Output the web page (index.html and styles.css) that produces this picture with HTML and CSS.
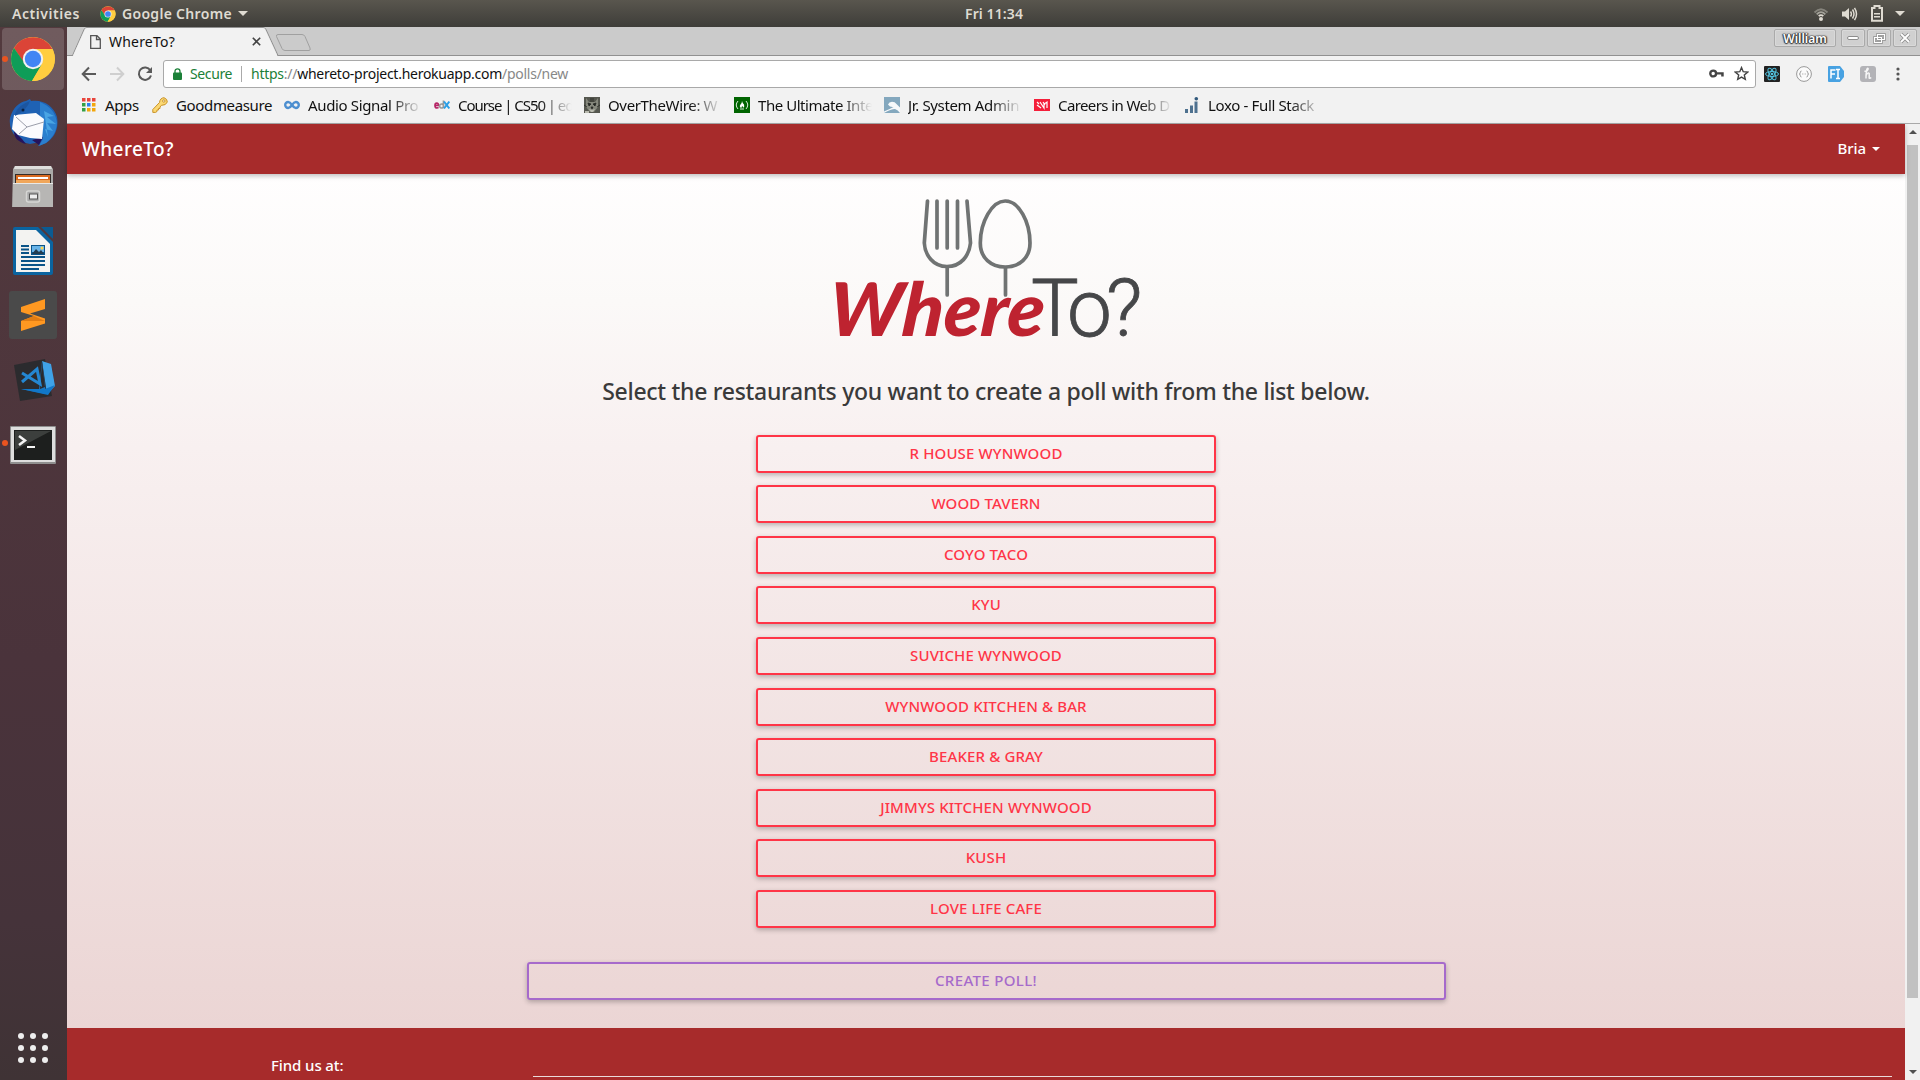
FILE: index.html
```html
<!DOCTYPE html>
<html lang="en">
<head>
<meta charset="utf-8">
<title>WhereTo?</title>
<link rel="stylesheet" href="styles.css">
</head>
<body>
<header class="topbar">
  <div class="topbar-left">
    <span class="activities">Activities</span>
    <svg class="mini-chrome" viewBox="0 0 46 46"><use href="#chrome"/></svg>
    <span class="appname">Google Chrome</span>
    <svg class="tri" viewBox="0 0 10 5"><path d="M0 0h10L5 5z"/></svg>
  </div>
  <span class="clock">Fri 11:34</span>
  <div class="topbar-right">
    <svg width="16" height="16" viewBox="0 0 16 16" fill="none" stroke-width="1.8"><path d="M1.500 6.500Q8 0 14.500 6.500" stroke="#86847c"/><path d="M3.700 8.300Q8 4 12.300 8.300" stroke="#a5a39b"/><path d="M5.700 10.200Q8 8 10.300 10.200" stroke="#dfdbd2"/><circle cx="8" cy="13" r="2" fill="#dfdbd2"/></svg>
    <svg width="17" height="16" viewBox="0 0 17 16"><path d="M1 5.500h3L8 2v12L4 10.500H1z" fill="#dfdbd2"/><path d="M9.500 5.500q1.800 2.500 0 5M11.500 3.500q3 4.500 0 9M13.500 1.800q4 6.200 0 12.400" fill="none" stroke="#dfdbd2" stroke-width="1.500"/></svg>
    <svg width="12" height="17" viewBox="0 0 12 17"><path d="M1 3h2.500V1h5v2H11v12.800H1z" fill="none" stroke="#dfdbd2" stroke-width="2"/><path d="M3 8.700h6M3 11.700h6" stroke="#dfdbd2" stroke-width="1.600"/></svg>
    <svg class="tri" viewBox="0 0 10 5"><path d="M0 0h10L5 5z"/></svg>
  </div>
</header>

<div class="desktop">
  <nav class="launcher">
    <div class="slot active running">
      <svg width="46" height="46" viewBox="0 0 46 46"><g id="chrome"><circle cx="23" cy="23" r="22" fill="#ffcd40"/><path d="M4 12A22 22 0 0 1 42.300 13H23L14 27z" fill="#db4437"/><path d="M4 12A22 22 0 0 0 22 45L31.500 29 14.500 27z" fill="#0f9d58"/><path d="M23 13h19.300A22 22 0 0 1 22 45l10-17z" fill="#ffcd40"/><circle cx="23" cy="23" r="10.200" fill="#f1f1f1"/><circle cx="23" cy="23" r="8.200" fill="#4285f4"/></g></svg>
    </div>
    <div class="slot">
      <svg width="50" height="50" viewBox="0 0 50 50"><path d="M2 20C5 9 12 4 18 3l4-2 1 2c12-2 23 5 26 16 2 11-2 20-11 26l-8 3 2-4-10 2C10 44 0 34 2 20z" fill="#1f62b4"/><path d="M32 4c10 4 16 11 17 21-1 10-5 15-11 20l-7 3 4-7-3-16z" fill="#2b7fce"/><path d="M36 13l10 5-7 1 9 7-9-1 6 8-8-2 3 8z" fill="#49a5e4"/><path d="M6 33l8 8 4 5C10 44 6 40 6 33zM24 42l11-3-4 8z" fill="#25145c"/><path d="M6 17L28 15l8 6-2 20-12-1-12-3-6-6 1-8z" fill="#fbfbfd"/><path d="M8 19l11 10 17-5M19 29l-8 7" fill="none" stroke="#9b9eaa"/><path d="M7 16Q10 7 22 3q-3 9-15 15z" fill="#1c559f"/><circle cx="15" cy="12" r="1.500" fill="#0b2242"/></svg>
    </div>
    <div class="slot">
      <svg width="42" height="44" viewBox="0 0 42 44"><path d="M1 4l2-3h36l2 3v38H0z" fill="#aaa9a7"/><path d="M2 4h38l-1-3H3z" fill="#dededc"/><path d="M3 9h36v9H3z" fill="#342c28"/><path d="M4 10h34v8H4z" fill="#d96a20"/><path d="M6 12h30v2H6z" fill="#fff"/><path d="M4 15h34v4H4z" fill="#f0a65a"/><path d="M1 18h40v24H1z" fill="#b7b6b4"/><path d="M1 18h40v1H1z" fill="#e8e8e6"/><rect x="14.500" y="26" width="13" height="11" rx="2" fill="#aaa" stroke="#d6d6d4" stroke-width="1.500"/><rect x="17.500" y="29" width="8" height="5" fill="#eee" stroke="#555"/></svg>
    </div>
    <div class="slot">
      <svg width="40" height="48" viewBox="0 0 40 48"><path d="M2 0h23l15 15v31q0 2-2 2H2q-2 0-2-2V2q0-2 2-2z" fill="#0a64a0"/><path d="M3 3h20l14 14v28H3z" fill="#f3f3f1"/><path d="M28 0h12v12z" fill="#0b5b92"/><path d="M8 19h8M8 22.500h8M8 26h8M8 30h24M8 34h24M8 38h24M8 42h18" stroke="#0a5488" stroke-width="1.800"/><path d="M18 18h14v10H18z" fill="#0a5488"/><path d="M19 19h12v6H19z" fill="#68b4e8"/><path d="M19 27l4-5 3 3 2-2 3 4z" fill="#223c50"/><circle cx="29" cy="21" r="1.500" fill="#ffd44a"/></svg>
    </div>
    <div class="slot">
      <svg width="48" height="48" viewBox="0 0 48 48"><rect width="48" height="48" rx="3" fill="#4a4a4a"/><path d="M36 8v10L21 22.500l15 5v5L12 40V30l13-5-13-4v-5z" fill="#ff9821"/><path d="M12 30l13-5 11 5z" fill="#e07c14"/></svg>
    </div>
    <div class="slot code">
      <svg width="42" height="44" viewBox="0 0 42 44"><path d="M0 7l31-6 7 37-32 5z" fill="#2b2b2e"/><path d="M28 3l9 3 4 22-8 8z" fill="#3fa2e8"/><path d="M28 3l4 33-25-5 18 1z" fill="#1a75c0"/><path d="M28 3l3 26-5 2z" fill="#2b2b2e"/><path d="M7 31l24 0 10-4-7 10z" fill="#1177c8"/><path d="M8 15l18 11-3-15L8 24" fill="none" stroke="#2487d2" stroke-width="3"/></svg>
    </div>
    <div class="slot running terminal">
      <svg width="46" height="38" viewBox="0 0 46 38"><rect width="46" height="38" rx="1" fill="#8f8f8f"/><rect x="1" y="1" width="44" height="35" fill="#dedede"/><rect x="4" y="4" width="38" height="30" fill="#1d1f1e"/><path d="M5 5h36L5 24z" fill="#3c3f3d"/><path d="M9 10l6 4.500L9 19" fill="none" stroke="#f4f4f4" stroke-width="2.500"/><path d="M17 21h8" stroke="#f4f4f4" stroke-width="2"/></svg>
    </div>
    <div class="grid-button"><i></i><i></i><i></i><i></i><i></i><i></i><i></i><i></i><i></i></div>
  </nav>

  <main class="window">
    <div class="tabstrip">
      <svg class="tabshape" width="250" height="29" viewBox="0 0 250 29"><path d="M0 28.500H5.500L17 2.500Q18 .5 20 .5H196Q198 .5 199 2.500L211 28.500H250" fill="none" stroke="#919191"/><path d="M5.800 29L17.500 3Q18 1 20 1H196Q198 1 198.500 3L210.500 29z" fill="#f2f2f2"/><path d="M211 7.500H235q2 0 3 2L243 21q.8 2.500-1 2.500H218q-2 0-3-2L209.500 9.500q-.5-2 1.500-2z" fill="#cbcbcb" stroke="#a0a0a0"/></svg>
      <div class="tab">
        <svg width="11" height="14" viewBox="0 0 11 14"><path d="M.7.700H7L10.300 4v9.300H.7zM6.500.7V4.500h3.800" fill="none" stroke="#555" stroke-width="1.300"/></svg>
        <span class="tab-title">WhereTo?</span>
        <svg width="9" height="9" viewBox="0 0 9 9"><path d="M.8.800l7.400 7.400M8.200.8L.8 8.200" stroke="#444" stroke-width="1.600"/></svg>
      </div>
      <div class="winbuttons">
        <span class="user">William</span>
        <b><svg width="12" height="4" viewBox="0 0 12 4"><rect x=".5" y=".5" width="11" height="3" rx="1.500" fill="#fff" stroke="#8d8d8d"/></svg></b>
        <b><svg width="13" height="11" viewBox="0 0 13 11" fill="none"><path d="M4.500 1.500h7v5h-7zM1.500 4.500h7v5h-7z" stroke="#8d8d8d" stroke-width="2.600"/><path d="M4.500 1.500h7v5h-7zM1.500 4.500h7v5h-7z" stroke="#fff" stroke-width="1.200"/></svg></b>
        <b><svg width="12" height="12" viewBox="0 0 12 12"><path d="M2 2l8 8M10 2l-8 8" stroke="#8d8d8d" stroke-width="3.500"/><path d="M2 2l8 8M10 2l-8 8" stroke="#fff" stroke-width="1.800"/></svg></b>
      </div>
    </div>

    <div class="toolbar">
      <div class="navicons">
        <svg width="16" height="16" viewBox="0 0 16 16"><path d="M15 8H2M8 1.500L1.700 8 8 14.500" fill="none" stroke="#5a5a5a" stroke-width="2"/></svg>
        <svg width="16" height="16" viewBox="0 0 16 16"><path d="M1 8H14M8 1.500L14.300 8 8 14.500" fill="none" stroke="#cfcfcf" stroke-width="2"/></svg>
        <svg width="16" height="16" viewBox="0 0 16 16"><path d="M13.300 4.300A6.200 6.200 0 1 0 14 9.500" fill="none" stroke="#5a5a5a" stroke-width="2"/><path d="M15 1v6H9z" fill="#5a5a5a"/></svg>
      </div>
      <div class="omnibox">
        <svg width="9" height="12" viewBox="0 0 9 12"><rect y="4.500" width="9" height="7.500" rx="1" fill="#1b8038"/><path d="M2 5V3.300a2.500 2.500 0 0 1 5 0V5" fill="none" stroke="#1b8038" stroke-width="1.300"/></svg>
        <span class="secure">Secure</span>
        <span class="url"><em>https</em>://<strong>whereto-project.herokuapp.com</strong>/polls/new</span>
        <svg class="key" width="15" height="9" viewBox="0 0 15 9"><circle cx="4.200" cy="4.500" r="2.900" fill="none" stroke="#444" stroke-width="2.400"/><path d="M7 3.300h7.700v4.200h-2.500v-2H7z" fill="#444"/></svg>
        <svg class="star" width="15" height="15" viewBox="0 0 15 15"><path d="M7.500 1.600l1.700 4.100 4.500.4-3.400 2.900 1 4.400-3.800-2.300-3.800 2.300 1-4.400L1.300 6.100l4.500-.4z" fill="none" stroke="#444" stroke-width="1.400"/></svg>
      </div>
      <div class="extensions">
        <svg width="16" height="16" viewBox="0 0 16 16"><rect width="16" height="16" rx="1" fill="#222"/><g fill="none" stroke="#53c1de" stroke-width="1"><ellipse cx="8" cy="8" rx="6.500" ry="2.500"/><ellipse cx="8" cy="8" rx="6.500" ry="2.500" transform="rotate(60 8 8)"/><ellipse cx="8" cy="8" rx="6.500" ry="2.500" transform="rotate(120 8 8)"/></g><circle cx="8" cy="8" r="1.300" fill="#53c1de"/></svg>
        <svg width="16" height="16" viewBox="0 0 16 16"><circle cx="8" cy="8" r="7.400" fill="#fbfbfb" stroke="#999"/><path d="M5.500 5Q4.300 5 4.300 6.500T3.300 8q1 0 1 1.500T5.500 11M10.500 5q1.200 0 1.200 1.500T12.700 8q-1 0-1 1.500T10.500 11M6.300 8h1M8.700 8h1" fill="none" stroke="#999"/></svg>
        <svg width="16" height="16" viewBox="0 0 16 16"><path d="M1 0h11l4 5v6l-4 5H1q-1 0-1-1V1q0-1 1-1z" fill="#48a2e2"/><path d="M3 12.500V4h4.500M3 8h4M8 3.500h4M10 3.500v9M8 12.500h4" fill="none" stroke="#fff" stroke-width="1.500"/></svg>
        <svg width="16" height="16" viewBox="0 0 16 16"><rect width="16" height="16" rx="3" fill="#b3b3b7"/><path d="M4.500 5Q7 6 8 3.500 8.500 2 7.300 2.500 6 4 6 12.500M6.200 9Q8 6 9.200 7.500V12q1 .5 2-.5" fill="none" stroke="#f6f6f6" stroke-width="1.500"/></svg>
        <svg width="4" height="14" viewBox="0 0 4 14" fill="#555"><circle cx="2" cy="2" r="1.600"/><circle cx="2" cy="7" r="1.600"/><circle cx="2" cy="12" r="1.600"/></svg>
      </div>
    </div>

    <div class="bookmarks">
      <a class="mark apps"><svg width="14" height="14" viewBox="0 0 14 14"><path d="M0 0h3.500v3.500H0zM5 0h3.500v3.500H5zM10 0h3.500v3.500H10z" fill="#e8453c"/><path d="M0 5h3.500v3.500H0z" fill="#34a045"/><path d="M5 5h3.500v3.500H5z" fill="#2a7fee"/><path d="M10 5h3.500v3.500H10z" fill="#f2a60c"/><path d="M0 10h3.500v3.500H0z" fill="#34a045"/><path d="M5 10h3.500v3.500H5zM10 10h3.500v3.500H10z" fill="#f2a60c"/></svg><span>Apps</span></a>
      <a class="mark good"><svg width="16" height="16" viewBox="0 0 16 16"><path d="M7.500 5.500Q8 1 12 .7 15.500 2 15.300 5 14 8.500 9.500 8.300L8 10v1.500H6.500V13H5v1.500L3.500 15.400H.8V12.500z" fill="#fbd873" stroke="#c99227"/><circle cx="11.800" cy="4" r="1.200" fill="#fff" stroke="#c99227"/></svg><span>Goodmeasure</span></a>
      <a class="mark"><svg width="16" height="16" viewBox="0 0 16 16"><path d="M8 8Q6 5 4.200 5a3 3 0 0 0 0 6Q6 11 8 8t3.800-3a3 3 0 0 1 0 6Q10 11 8 8z" fill="none" stroke="#4d8fd0" stroke-width="2.400"/></svg><span class="fade">Audio Signal Pro</span></a>
      <a class="mark"><svg width="16" height="16" viewBox="0 0 16 16" fill="none" stroke-width="1.700"><path d="M1 8.500h3.500Q4.500 6.200 2.800 6.200 1 6.300 1 8.500 1 11 3 11l1.600-.5" stroke="#b72667"/><path d="M9.500 3.500V11.300M9.500 8.500a2 2 0 1 0 0 1" stroke="#999"/><path d="M10 4.500l5.300 7M15.300 4.500L10 11.500" stroke="#2b9fe6" stroke-width="2"/></svg><span class="fade tighter">Course | CS50 | ed</span></a>
      <a class="mark"><svg width="16" height="16" viewBox="0 0 16 16"><path d="M0 0h16v16H0z" fill="#55574f"/><path d="M2 1l3 4h6l3-4v9l-4 5H6l-4-5z" fill="#85877c"/><path d="M4 6l3 1-2 2zM12 6L9 7l2 2zM7 10h2l-1 2zM7 1v4M9 1v4M0 8l3 2M16 8l-3 2" fill="#262824" stroke="#262824" stroke-width=".8"/><path d="M1 14h4v2H1zM5 12l3 1 3-1-2 3H7z" fill="#b9baaf"/></svg><span class="fade">OverTheWire: W</span></a>
      <a class="mark"><svg width="16" height="16" viewBox="0 0 16 16"><path d="M0 0h16v16H0z" fill="#006400"/><path d="M4 4Q.5 8 4 12M12 4q3.500 4 0 8M6 12h4" fill="none" stroke="#d9ead9"/><path d="M8 4q.5 2 2 3.500 1 2-1 3.500 0-2-1-2 0 1.500-1 2-2-1.500-.5-3.500Q8 6 8 4z" fill="#fff"/></svg><span class="fade tight-s">The Ultimate Inte</span></a>
      <a class="mark"><svg width="16" height="16" viewBox="0 0 16 16"><path d="M0 0h16v16H0z" fill="#84a8be"/><path d="M4 7.500Q5 5 8 4.800 11 4.800 12.500 7L16 10.500V16q-2-3-5-4-4 0-11 4v-1.500Q6 12 9.500 10 6 10.500 4 7.500z" fill="#f6f9fb"/></svg><span class="fade">Jr. System Admin</span></a>
      <a class="mark"><svg width="16" height="12" viewBox="0 0 16 12"><path d="M0 0h16v12H0z" fill="#f41f3a"/><path d="M3 3l2 2M3 6l4 3M6 3l4 6V5l3-2v6M9 3l2 3" fill="none" stroke="#fff" stroke-width="1.200"/></svg><span class="fade tight">Careers in Web D</span></a>
      <a class="mark"><svg width="16" height="16" viewBox="0 0 16 16"><path d="M1 12h3v4H1zM6 8.500h3V16H6zM10.500 4.500h3V16h-3z" fill="#4e718f"/><circle cx="12.300" cy="1.800" r="1.800" fill="#31597c"/></svg><span class="fade">Loxo - Full Stack</span></a>
    </div>

    <div class="viewport">
      <div class="page">
        <nav class="navbar">
          <a class="brand">WhereTo?</a>
          <a class="account"><span>Bria</span><svg width="8" height="4" viewBox="0 0 8 4"><path d="M0 0h8L4 4z" fill="#fff"/></svg></a>
        </nav>
        <section class="content">
          <svg class="logo" width="320" height="150" viewBox="826 194 320 150">
            <g fill="none" stroke="#707373" stroke-width="3.700" stroke-linecap="round">
              <path d="M927.500 201L924.300 243C925 255 933 266.500 947 266.500S969 256 970.500 243L967 201"/>
              <path d="M937 201v47M947.200 201v47M957.500 201v47M947.200 268v27M1005.500 268v27"/>
              <path d="M1005.200 201C992 201 980.300 222 980.300 243 980.300 258 991 267 1005.200 267S1030 258 1030 243C1030 222 1019 201 1005.200 201z"/>
            </g>
            <text class="logo-where" transform="translate(827 336) skewX(-5)" textLength="216" lengthAdjust="spacingAndGlyphs">Where</text>
            <text class="logo-to" x="1031 1067 1106" y="336">To?</text>
          </svg>
          <h1 class="lead">Select the restaurants you want to create a poll with from the list below.</h1>
          <div class="choices">
            <button class="btn">R HOUSE WYNWOOD</button>
            <button class="btn">WOOD TAVERN</button>
            <button class="btn">COYO TACO</button>
            <button class="btn">KYU</button>
            <button class="btn">SUVICHE WYNWOOD</button>
            <button class="btn">WYNWOOD KITCHEN &amp; BAR</button>
            <button class="btn">BEAKER &amp; GRAY</button>
            <button class="btn">JIMMYS KITCHEN WYNWOOD</button>
            <button class="btn">KUSH</button>
            <button class="btn">LOVE LIFE CAFE</button>
          </div>
          <button class="btn create">CREATE POLL!</button>
        </section>
        <footer class="footer">
          <span class="find">Find us at:</span>
          <hr>
        </footer>
      </div>
      <div class="scrollbar">
        <svg width="8" height="4" viewBox="0 0 8 4"><path d="M0 4h8L4 0z" fill="#505050"/></svg>
        <i class="thumb"></i>
        <svg width="8" height="4" viewBox="0 0 8 4"><path d="M0 0h8L4 4z" fill="#505050"/></svg>
      </div>
    </div>
  </main>
</div>
</body>
</html>
```
FILE: styles.css
```css
* { box-sizing: border-box; }
body { margin: 0; width: 1920px; height: 1080px; overflow: hidden; display: flex; flex-direction: column; font-family: "Noto Sans", "Open Sans", sans-serif; }
svg { display: block; flex: none; }
span { white-space: nowrap; }

.topbar { height: 27px; display: grid; grid-template-columns: 965px auto 1fr; align-items: center; padding-right: 15px; background: linear-gradient(#59564e, #3e3d39); color: #dfdbd2; font-size: 14px; font-weight: 600; line-height: 26px; }
.topbar-left { display: flex; align-items: center; padding-left: 12px; }
.activities { letter-spacing: .55px; }
.mini-chrome { width: 16px; height: 16px; margin: 0 6px 0 20px; }
.appname { margin-right: 6px; letter-spacing: .31px; }
.clock { letter-spacing: .1px; }
.tri { width: 10px; height: 5px; fill: #dfdbd2; }
.topbar-right { display: flex; align-items: center; justify-content: flex-end; gap: 12.5px; }

.desktop { flex: 1; display: flex; min-height: 0; }
.launcher { width: 67px; display: flex; flex-direction: column; background: linear-gradient(#533a3e, #4a333b 60%, #45333a 85%, #3f3335); }
.slot { height: 64px; display: flex; align-items: center; justify-content: center; position: relative; width: 66px; }
.slot.active::after { content: ""; position: absolute; z-index: 0; left: 2px; top: 1px; width: 62px; height: 62px; border-radius: 4px; background: rgba(255,255,255,.17); }
.slot.code { padding: 2px 0 0 4px; }
.slot.terminal { padding-top: 3px; }
.slot svg { position: relative; z-index: 1; }
.slot.running::before { content: ""; position: absolute; z-index: 2; left: 2px; top: 29px; width: 6px; height: 6px; border-radius: 50%; background: #e95420; }
.grid-button { margin: auto 0 17px 18px; display: grid; grid-template-columns: repeat(3, 6px); gap: 6px; }
.grid-button i { width: 6px; height: 6px; border-radius: 50%; background: #eee; }

.window { flex: 1; display: flex; flex-direction: column; background: #f2f2f2; min-width: 0; }
.tabstrip { height: 29px; position: relative; display: flex; justify-content: space-between; background: #cbcbcb; box-shadow: inset 0 -1px #919191; }
.tabshape { position: absolute; left: 0; top: 0; }
.tab { position: relative; display: flex; align-items: center; width: 194px; padding-left: 23px; font-size: 14px; color: #111; letter-spacing: .2px; }
.tab-title { margin: 0 auto 0 8px; }
.winbuttons { display: flex; gap: 2px; padding: 2px 3px 0 0; }
.winbuttons > * { width: 24px; height: 18px; display: flex; align-items: center; justify-content: center; border: 1px solid #aaa; border-radius: 2px; background: #d0d0d0; box-shadow: inset 0 0 0 1px #d9d9d9; }
.winbuttons .user { width: 62px; margin-right: 3px; font-size: 12px; font-weight: 600; color: #fff; text-shadow: 0 0 1px #333, 0 0 2px #333, 0 1px 1px #444, 1px 0 1px #444, -1px 0 1px #444; }

.toolbar { height: 36px; display: flex; align-items: center; padding: 0 20px 0 14px; font-size: 14px; }
.navicons { display: flex; gap: 12px; width: 82px; }
.omnibox { width: 1593px; height: 28px; display: flex; align-items: center; padding: 0 6px 1px 9px; background: #fff; border: 1px solid #a9a9a9; border-radius: 3px; }
.secure { margin-left: 8px; color: #1b8038; letter-spacing: -.39px; }
.url { margin-left: 9px; padding-left: 9px; color: #888; border-left: 1px solid #aaa; line-height: 16px; letter-spacing: -.26px; }
.url em { color: #1b8038; font-style: normal; }
.url strong { color: #111; font-weight: 400; }
.key { margin-left: auto; }
.star { margin-left: 10px; }
.extensions { margin-left: 8px; display: flex; align-items: center; gap: 16px; }
.extensions svg:last-child { margin-left: 4px; }

.bookmarks { height: 32px; display: flex; align-items: center; gap: 12px; padding: 0 0 5px 15px; font-size: 15px; color: #111; border-bottom: 1px solid #a9a9a9; line-height: 22px; letter-spacing: -.35px; }
.mark { display: flex; align-items: center; gap: 8px; width: 138px; }
.mark span { padding-bottom: 1px; }
.mark.apps { width: 58px; gap: 9px; }
.mark.good { width: 120px; }
.fade { width: 114px; overflow: hidden; -webkit-mask-image: linear-gradient(to right, #000 72%, transparent); mask-image: linear-gradient(to right, #000 72%, transparent); }
.fade.tight { letter-spacing: -.6px; }
.fade.tight-s { letter-spacing: -.45px; }
.fade.tighter { letter-spacing: -1.05px; }

.viewport { flex: 1; display: flex; min-height: 0; }
.page { flex: 1; display: flex; flex-direction: column; min-width: 0; }
.navbar { height: 50px; display: flex; align-items: center; justify-content: space-between; padding: 0 25px 2px 15px; background: #a72b2b; color: #fff; box-shadow: 0 2px 5px rgba(0,0,0,.26); position: relative; z-index: 1; }
.brand { padding-top: 1px; font-size: 19px; font-weight: 500; letter-spacing: .4px; }
.account { display: flex; align-items: center; gap: 6px; font-size: 15px; font-weight: 500; letter-spacing: -.1px; }
.account svg { margin-top: 2px; }
.content { height: 854px; display: flex; flex-direction: column; align-items: center; background: linear-gradient(#fffefe, #fbf9f8 15%, #f8f0f0 32%, #ebd5d4); }
.logo { margin-top: 20px; overflow: visible; }
.logo-where { font: italic 900 74px "Lato", sans-serif; fill: #be2330; }
.logo-to { font: 300 80px "Roboto", sans-serif; fill: #464749; stroke: #464749; stroke-width: .8px; }
.lead { margin: 30px 0 0; height: 60.8px; font-size: 23px; line-height: 34px; font-weight: 500; letter-spacing: -.29px; color: #3a3a3a; white-space: nowrap; }
.choices { width: 460px; display: flex; flex-direction: column; gap: 12.55px; }
.btn { display: block; height: 38px; padding: 0 0 2px; border: 2px solid #ff3547; border-radius: 3px; background: transparent; color: #ff3547; font: 500 15px "Noto Sans", sans-serif; letter-spacing: .14px; box-shadow: 0 2px 5px rgba(0,0,0,.26); }
.create { width: 919px; margin-top: 34.2px; border-color: #a66acb; color: #a66acb; letter-spacing: .35px; }
.footer { flex: 1; background: #a72b2b; color: #fff; display: flex; padding: 27px 13px 0 204px; font-size: 15px; font-weight: 500; letter-spacing: -.1px; }
.find { width: 262px; }
.footer hr { flex: 1; height: 1px; margin: 21px 0 0; border: 0; background: #eadada; }
.scrollbar { width: 15px; display: flex; flex-direction: column; align-items: center; padding: 6px 0; background: #f1f1f1; }
.thumb { width: 11px; height: 853px; margin: 11px 0 auto; background: #c1c1c1; }
```
